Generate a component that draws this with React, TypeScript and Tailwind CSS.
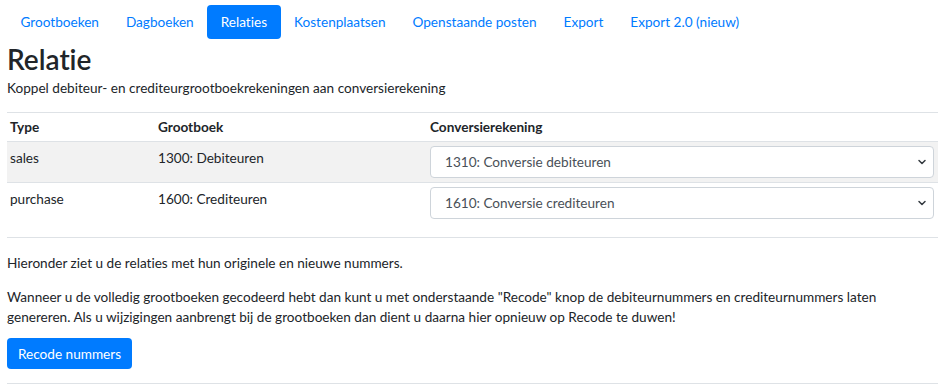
import { ChevronDown } from 'lucide-react';

const tabs = [
  'Grootboeken',
  'Dagboeken',
  'Relaties',
  'Kostenplaatsen',
  'Openstaande posten',
  'Export',
  'Export 2.0 (nieuw)',
];

const rows = [
  { type: 'sales', grootboek: '1300: Debiteuren', conversie: '1310: Conversie debiteuren', striped: true },
  { type: 'purchase', grootboek: '1600: Crediteuren', conversie: '1610: Conversie crediteuren', striped: false },
];

const Select = ({ value }: { value: string }) => (
  <div className="relative">
    <select
      defaultValue={value}
      className="w-full h-[32px] appearance-none bg-white border border-[#ced4da] rounded-[4px] pl-[14px] pr-8 text-[13.6px] text-[#495057] outline-none"
    >
      <option>{value}</option>
    </select>
    <ChevronDown
      className="absolute right-[6px] top-[10px] w-[12px] h-[12px] text-[#343a40] pointer-events-none"
      strokeWidth={3}
    />
  </div>
);

export default function App() {
  return (
    <div
      className="w-[945px] h-[385px] bg-white px-[7px] text-[#212529] text-[13.6px] leading-[20px] overflow-hidden [font-variant-ligatures:none]"
      style={{ fontFamily: 'Lato, "Noto Sans", sans-serif' }}
    >
      <nav className="flex pt-[5px]">
        {tabs.map((t) => (
          <a
            key={t}
            className={
              t === 'Relaties'
                ? 'px-[13.5px] py-[7px] rounded-[4px] bg-[#007bff] text-white'
                : 'px-[13.5px] py-[7px] rounded-[4px] text-[#007bff]'
            }
          >
            {t}
          </a>
        ))}
      </nav>

      <h1 className="text-[28px] leading-[36px] font-semibold mt-[2px]">Relatie</h1>
      <p className="mt-[1px] mb-[14px]">Koppel debiteur- en crediteurgrootboekrekeningen aan conversierekening</p>

      <table className="w-full border-collapse table-fixed">
        <colgroup>
          <col className="w-[147px]" />
          <col className="w-[272px]" />
          <col />
        </colgroup>
        <thead>
          <tr className="border-t border-[#dee2e6]">
            <th className="text-left font-bold px-[3px] py-[4px] h-[28px]">Type</th>
            <th className="text-left font-bold px-[4px] py-[4px]">Grootboek</th>
            <th className="text-left font-bold px-[4px] py-[4px]">Conversierekening</th>
          </tr>
        </thead>
        <tbody>
          {rows.map((r) => (
            <tr
              key={r.type}
              className={r.striped ? 'bg-[#f2f2f2] border-t border-[#dee2e6]' : 'border-t border-[#dee2e6]'}
            >
              <td className="align-top px-[3px] pt-[6px] pb-[4px]">{r.type}</td>
              <td className="align-top px-[4px] pt-[6px] pb-[4px]">{r.grootboek}</td>
              <td className="align-top px-[4px] pt-[4px] pb-[4px]">
                <Select value={r.conversie} />
              </td>
            </tr>
          ))}
        </tbody>
      </table>

      <hr className="mt-[14px] border-[#dee2e6]" />

      <p className="mt-[15px] mb-[14px]">Hieronder ziet u de relaties met hun originele en nieuwe nummers.</p>
      <p className="mb-[11px] pr-[4px]">
        Wanneer u de volledig grootboeken gecodeerd hebt dan kunt u met onderstaande "Recode" knop de debiteurnummers en
        crediteurnummers laten genereren. Als u wijzigingen aanbrengt bij de grootboeken dan dient u daarna hier opnieuw
        op Recode te duwen!
      </p>
      <button className="h-[31px] px-[11px] rounded-[4px] bg-[#007bff] text-white">Recode nummers</button>
      <hr className="mt-[14px] border-[#dee2e6]" />
    </div>
  );
}
